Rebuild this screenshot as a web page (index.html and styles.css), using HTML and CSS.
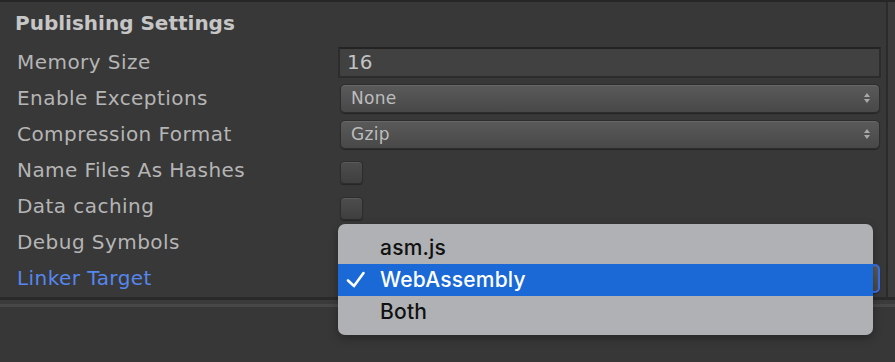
FILE: index.html
```html
<!DOCTYPE html>
<html lang="en">
<head>
    <meta charset="UTF-8">
    <meta name="viewport" content="width=device-width, initial-scale=1.0">
    <title>Publishing Settings</title>
    <link rel="stylesheet" href="styles.css">
</head>
<body>
    <div class="topbar"></div>

    <div class="inspector">
        <div class="content">
            <div class="header">Publishing Settings</div>

            <div class="row">
                <div class="label">Memory Size</div>
                <div class="field">16</div>
            </div>
            <div class="row">
                <div class="label">Enable Exceptions</div>
                <div class="popup">
                    <span>None</span>
                    <svg class="arrows" width="6" height="12" viewBox="0 0 6 12"><path d="M0 5 L3 1 L6 5 Z M0 7 L3 11 L6 7 Z" fill="#a9a9a9"/></svg>
                </div>
            </div>
            <div class="row">
                <div class="label">Compression Format</div>
                <div class="popup">
                    <span>Gzip</span>
                    <svg class="arrows" width="6" height="12" viewBox="0 0 6 12"><path d="M0 5 L3 1 L6 5 Z M0 7 L3 11 L6 7 Z" fill="#a9a9a9"/></svg>
                </div>
            </div>
            <div class="row">
                <div class="label">Name Files As Hashes</div>
                <div class="checkbox"></div>
            </div>
            <div class="row">
                <div class="label">Data caching</div>
                <div class="checkbox"></div>
            </div>
            <div class="row">
                <div class="label">Debug Symbols</div>
                <div class="checkbox"></div>
            </div>
            <div class="row">
                <div class="label focused">Linker Target</div>
                <div class="popup active">
                    <span></span>
                    <svg class="arrows" width="6" height="12" viewBox="0 0 6 12"><path d="M0 5 L3 1 L6 5 Z M0 7 L3 11 L6 7 Z" fill="#a9a9a9"/></svg>
                </div>
            </div>
        </div>
        <div class="edge"></div>
    </div>

    <div class="divider"></div>
    <div class="footer"></div>

    <div class="menu">
        <div class="menu-item">asm.js</div>
        <div class="menu-item selected">
            <svg class="check" width="20" height="18" viewBox="0 0 20 18"><path d="M2 9.5 L8 15 L17.5 2" fill="none" stroke="#fff" stroke-width="2.6" stroke-linecap="round" stroke-linejoin="round"/></svg>
            WebAssembly
        </div>
        <div class="menu-item">Both</div>
    </div>
</body>
</html>
```

FILE: styles.css
```css
body {
    margin: 0;
    width: 895px;
    height: 362px;
    overflow: hidden;
    background-color: #373737;
    font-family: "DejaVu Sans", sans-serif;
    position: relative;
}

.topbar {
    height: 2px;
    background-color: #262626;
}

.inspector {
    display: flex;
    height: 295px;
    background-color: #383838;
}

.content {
    flex: 1;
    padding: 3px 5px 0 0;
}

.edge {
    width: 7px;
    border-left: 2px solid #2b2b2b;
    background-color: #3c3c3c;
}

.header {
    height: 36px;
    line-height: 36px;
    margin-bottom: 3px;
    padding-left: 15px;
    font-size: 20px;
    font-weight: bold;
    color: #c6c6c6;
}

.row {
    display: flex;
    align-items: center;
    height: 36px;
}

.label {
    width: 338px;
    flex-shrink: 0;
    padding-left: 17px;
    box-sizing: border-box;
    font-size: 20px;
    letter-spacing: 0.45px;
    color: #b5b5b5;
}

.label.focused {
    color: #5687ee;
}

.field {
    flex: 1;
    height: 31px;
    box-sizing: border-box;
    border: 2px solid #2c2c2c;
    border-top-color: #232323;
    background-color: #414141;
    padding-left: 7px;
    font-size: 20px;
    line-height: 27px;
    color: #c2c2c2;
}

.popup {
    flex: 1;
    display: flex;
    align-items: center;
    justify-content: space-between;
    height: 29px;
    margin: 0 1px 0 2px;
    padding: 0 9px 0 10px;
    box-sizing: border-box;
    border: 1px solid #2d2d2d;
    border-radius: 5px;
    background: linear-gradient(#5a5a5a, #484848);
    box-shadow: inset 0 1px 0 #686868, 0 1px 1px rgba(0,0,0,0.35);
    font-size: 17px;
    letter-spacing: 0.3px;
    color: #bdbdbd;
}

.popup.active {
    border: 2px solid #3a6fe6;
}

.checkbox {
    width: 23px;
    height: 23px;
    margin: 4px 0 0 2px;
    box-sizing: border-box;
    border: 1px solid #2d2d2d;
    border-radius: 4px;
    background: linear-gradient(#4d4d4d, #3f3f3f);
    box-shadow: inset 0 1px 0 #5a5a5a, 0 1px 1px rgba(0,0,0,0.35);
}

.divider {
    height: 3px;
    background-color: #2a2a2a;
    border-bottom: 4px solid #3b3b3b;
    box-shadow: 0 3px 0 #474747;
    margin-bottom: 3px;
}

.footer {
    height: 60px;
}

/* native popup menu lying over the inspector */
.menu {
    position: absolute;
    left: 338px;
    top: 224px;
    width: 535px;
    padding: 8px 0 7px;
    border-radius: 7px;
    background-color: #b0b1b5;
    box-shadow: 0 3px 10px rgba(0,0,0,0.3);
    font-family: Inter, "Liberation Sans", sans-serif;
    font-size: 21px;
    font-weight: 500;
    letter-spacing: 0.2px;
    color: #111;
}

.menu-item {
    position: relative;
    height: 32px;
    line-height: 32px;
    padding-left: 42px;
}

.menu-item.selected {
    background-color: #1a69d6;
    color: #fff;
}

.check {
    position: absolute;
    left: 8px;
    top: 7px;
}
```
